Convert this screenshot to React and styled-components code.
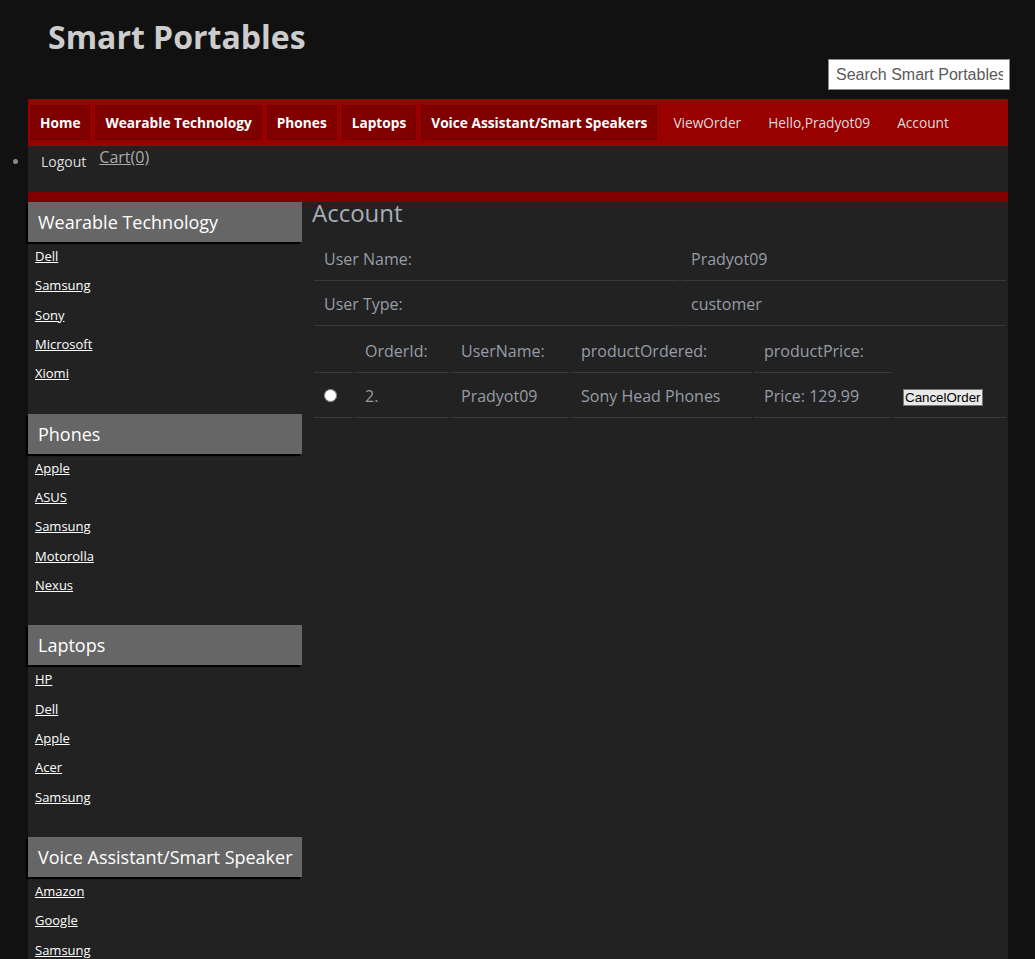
import React from "react";
import styled, { createGlobalStyle } from "styled-components";

const Global = createGlobalStyle`
  html { overflow: hidden; }
  body {
    margin: 0;
    background: #111111;
    font-family: "Open Sans", "DejaVu Sans", sans-serif;
  }
  * { box-sizing: border-box; }
`;

const Header = styled.header`
  width: 980px;
  margin: 0 27px 0 28px;
  padding: 15px 0 9px;
`;

const Title = styled.h1`
  margin: 0;
  padding-left: 20px;
  font-size: 32px;
  line-height: 44px;
  font-weight: 700;
  color: #cccccc;
`;

const SearchRow = styled.div`
  display: flex;
  justify-content: flex-end;
  margin-right: -2px;
`;

const Search = styled.input`
  width: 182px;
  height: 31px;
  padding: 0 6px 0 7px;
  border: 1px solid #8a8a8a;
  background: #fff;
  font-family: "Liberation Sans", Arial, sans-serif;
  font-size: 16px;
  color: #333;
  outline: none;
  &::placeholder { color: #5a5a5a; }
`;

const Page = styled.div`
  width: 980px;
  margin: 0 27px 0 28px;
  background: #222222;
  min-height: 900px;
`;

const NavBar = styled.ul`
  display: flex;
  gap: 5px;
  margin: 0;
  padding: 6px 2px;
  list-style: none;
  background: #990000;
`;

const NavItem = styled.li`
  height: 35px;
  line-height: 35px;
  padding: 0 ${(p) => (p.$strong ? "10px" : "11px")};
  font-size: 13.7px;
  font-weight: ${(p) => (p.$strong ? 700 : 400)};
  color: ${(p) => (p.$strong ? "#ffffff" : "#dddddd")};
  background: ${(p) => (p.$strong ? "#800000" : "transparent")};
  box-shadow: ${(p) => (p.$strong ? "inset 0 0 0 1px rgba(0,0,0,0.12)" : "none")};
  white-space: nowrap;
`;

const SubRow = styled.ul`
  display: flex;
  align-items: flex-start;
  gap: 2px;
  height: 46px;
  margin: 0;
  padding: 0 0 0 2px;
`;

const LogoutItem = styled.li`
  display: list-item;
  list-style: disc outside;
  margin-top: 6px;
  padding: 0 11px;
  font-size: 14px;
  line-height: 20px;
  color: #dddddd;
  &::marker { color: #8a8a8a; }
`;

const CartLink = styled.a`
  display: block;
  font-size: 16px;
  line-height: 22px;
  color: #aaaaaa;
  text-decoration: underline;
`;

const Strip = styled.div`
  height: 10px;
  background: #800000;
`;

const Body = styled.div`
  display: flex;
  align-items: flex-start;
`;

const Sidebar = styled.aside`
  width: 274px;
  flex: none;
`;

const Section = styled.section`
  margin-bottom: 25px;
`;

const SideHeading = styled.h3`
  margin: 0;
  height: 40px;
  line-height: 40px;
  padding-left: 10px;
  background: #666666;
  color: #ffffff;
  font-size: 18px;
  font-weight: 400;
  box-shadow: -2px 2px 1px #000;
  white-space: nowrap;
`;

const LinkList = styled.ul`
  margin: 0;
  padding: 0 0 0 7px;
  list-style: none;
`;

const LinkItem = styled.li`
  height: 29.33px;
  line-height: 29.33px;
  font-size: 13px;
  a {
    color: #ffffff;
    text-decoration: underline;
  }
`;

const Main = styled.main`
  flex: 1;
  padding-left: 10px;
`;

const MainTitle = styled.h2`
  margin: 0 0 12px;
  font-size: 24px;
  line-height: 22px;
  font-weight: 400;
  color: #a7adb4;
`;

const Table = styled.table`
  width: 100%;
  border-spacing: 2px;
  font-size: 16px;
  line-height: 22px;
  color: #969da6;
`;

const Cell = styled.td`
  width: ${(p) => (p.$w ? `${p.$w}px` : "auto")};
  padding: 10px;
  border-bottom: 1px solid #393939;
  text-align: left;
  vertical-align: middle;
  white-space: nowrap;
`;

const Radio = styled.input`
  margin: 0;
  width: 13px;
  height: 13px;
  vertical-align: middle;
  position: relative;
  top: -2px;
`;

const CancelButton = styled.button`
  padding: 0 1px;
  height: 17px;
  border: 1px solid #767676;
  background: #e9e9e9;
  color: #000;
  font-family: "Liberation Sans", Arial, sans-serif;
  font-size: 13.33px;
  line-height: 15px;
  vertical-align: middle;
`;

const sections = [
  { title: "Wearable Technology", links: ["Dell", "Samsung", "Sony", "Microsoft", "Xiomi"] },
  { title: "Phones", links: ["Apple", "ASUS", "Samsung", "Motorolla", "Nexus"] },
  { title: "Laptops", links: ["HP", "Dell", "Apple", "Acer", "Samsung"] },
  { title: "Voice Assistant/Smart Speaker", links: ["Amazon", "Google", "Samsung"] },
];

const navItems = [
  { label: "Home", strong: true },
  { label: "Wearable Technology", strong: true },
  { label: "Phones", strong: true },
  { label: "Laptops", strong: true },
  { label: "Voice Assistant/Smart Speakers", strong: true },
  { label: "ViewOrder" },
  { label: "Hello,Pradyot09" },
  { label: "Account" },
];

export default function App() {
  return (
    <>
      <Global />
      <Header>
        <Title>Smart Portables</Title>
        <SearchRow>
          <Search type="text" placeholder="Search Smart Portables" />
        </SearchRow>
      </Header>
      <Page>
        <NavBar>
          {navItems.map((n) => (
            <NavItem key={n.label} $strong={n.strong}>
              {n.label}
            </NavItem>
          ))}
        </NavBar>
        <SubRow>
          <LogoutItem>Logout</LogoutItem>
          <CartLink href="#">Cart(0)</CartLink>
        </SubRow>
        <Strip />
        <Body>
          <Sidebar>
            {sections.map((s) => (
              <Section key={s.title}>
                <SideHeading>{s.title}</SideHeading>
                <LinkList>
                  {s.links.map((l) => (
                    <LinkItem key={l}>
                      <a href="#">{l}</a>
                    </LinkItem>
                  ))}
                </LinkList>
              </Section>
            ))}
          </Sidebar>
          <Main>
            <MainTitle>Account</MainTitle>
            <Table>
              <tbody>
                <tr>
                  <Cell $w={365}>User Name:</Cell>
                  <Cell>Pradyot09</Cell>
                </tr>
                <tr>
                  <Cell>User Type:</Cell>
                  <Cell>customer</Cell>
                </tr>
              </tbody>
            </Table>
            <Table>
              <tbody>
                <tr>
                  <Cell $w={39}></Cell>
                  <Cell $w={94}>OrderId:</Cell>
                  <Cell $w={118}>UserName:</Cell>
                  <Cell $w={181}>productOrdered:</Cell>
                  <Cell $w={137}>productPrice:</Cell>
                </tr>
                <tr>
                  <Cell>
                    <Radio type="radio" name="order" />
                  </Cell>
                  <Cell>2.</Cell>
                  <Cell>Pradyot09</Cell>
                  <Cell>Sony Head Phones</Cell>
                  <Cell>Price: 129.99</Cell>
                  <Cell>
                    <CancelButton>CancelOrder</CancelButton>
                  </Cell>
                </tr>
              </tbody>
            </Table>
          </Main>
        </Body>
      </Page>
    </>
  );
}
